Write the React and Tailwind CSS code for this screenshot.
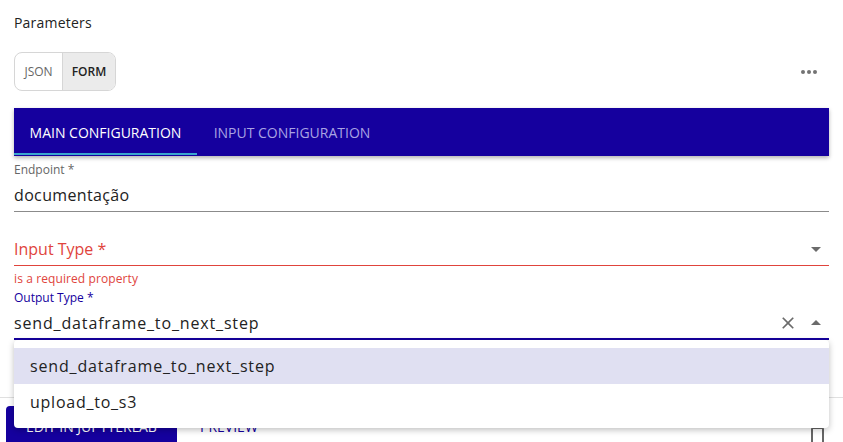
import React from "react";

const FONT = { fontFamily: "'Open Sans', 'Noto Sans', sans-serif" };

function ArrowDrop({ up = false, className = "" }) {
  return (
    <svg viewBox="0 0 24 24" width="24" height="24" className={className}>
      <path d={up ? "M7 14l5-5 5 5z" : "M7 10l5 5 5-5z"} fill="#6b6b6b" />
    </svg>
  );
}

function CloseIcon() {
  return (
    <svg viewBox="0 0 24 24" width="20" height="20">
      <path
        d="M19 6.41 17.59 5 12 10.59 6.41 5 5 6.41 10.59 12 5 17.59 6.41 19 12 13.41 17.59 19 19 17.59 13.41 12z"
        fill="#6b6b6b"
      />
    </svg>
  );
}

export default function App() {
  return (
    <div
      className="relative w-[843px] h-[442px] overflow-hidden bg-white text-[#222]"
      style={FONT}
    >
      {/* header */}
      <div className="px-[14px] pt-[13px]">
        <div className="text-[14px] leading-[20px] tracking-[0.2px] text-[#222]">Parameters</div>
        <div className="mt-[19px] flex items-center justify-between">
          <div className="flex h-[39px] rounded-[8px] border border-[#d6d6d6] overflow-hidden text-[12px]">
            <div className="flex items-center justify-center w-[48px] text-[#666] border-r border-[#d6d6d6]">
              JSON
            </div>
            <div className="flex items-center justify-center w-[52px] bg-[#ebebeb] text-[#222] font-semibold">
              FORM
            </div>
          </div>
          <div className="mr-[12px] flex items-center gap-[2px]">
            <span className="block w-[4px] h-[4px] rounded-full bg-[#737373]" />
            <span className="block w-[4px] h-[4px] rounded-full bg-[#737373]" />
            <span className="block w-[4px] h-[4px] rounded-full bg-[#737373]" />
          </div>
        </div>

        {/* tabs */}
        <div className="mt-[17px] flex h-[48px] bg-[#15009e] shadow-[0_2px_4px_rgba(0,0,0,0.3)]">
          <div className="relative flex items-center justify-center w-[183px] text-[14px] font-medium text-white">
            MAIN CONFIGURATION
            <span className="absolute left-0 right-0 bottom-[1px] h-[2px] bg-[#3aa6cf]" />
          </div>
          <div className="flex items-center justify-center w-[190px] text-[14px] font-medium text-[#a9a3e3]">
            INPUT CONFIGURATION
          </div>
        </div>

        {/* Endpoint */}
        <div className="mt-[7px] text-[12px] leading-[14px] text-[#666]">Endpoint *</div>
        <div className="pt-[6px] pb-[4px] border-b border-[#8b8b8b] text-[16px] leading-[24px] tracking-[0.35px] text-[#222]">
          documentação
        </div>

        {/* Input type */}
        <div className="mt-[25px] flex items-center justify-between pb-[4px] border-b border-[#e0443c] text-[16px] leading-[24px] text-[#e0443c]">
          <span>Input Type *</span>
          <ArrowDrop className="mr-[1px]" />
        </div>
        <div className="mt-[6px] text-[12px] leading-[14px] tracking-[0.1px] text-[#e0443c]">
          is a required property
        </div>

        {/* Output type */}
        <div className="mt-[5px] text-[12px] leading-[14px] text-[#15009e]">Output Type *</div>
        <div className="mt-[6px] flex items-center justify-between pb-[3px] border-b-2 border-[#15009e] text-[16px] leading-[24px] text-[#222]">
          <span className="tracking-[0.85px]">send_dataframe_to_next_step</span>
          <div className="flex items-center gap-[6px] mr-[1px]">
            <CloseIcon />
            <ArrowDrop up />
          </div>
        </div>
      </div>

      {/* bottom actions (behind dropdown) */}
      <div className="mt-[57px] h-px bg-[#e0e0e0]" />
      <div className="mt-[8px] flex items-center justify-between pl-[6px] pr-[19px]">
        <div className="flex items-center gap-[8px]">
          <div className="flex items-center h-[40px] w-[171px] justify-center rounded-[4px] bg-[#15009e] text-white text-[14px] font-medium">
            EDIT IN JUPYTERLAB
          </div>
          <div className="flex items-center h-[40px] px-[15px] text-[#15009e] text-[14px] font-medium">
            PREVIEW
          </div>
        </div>
        <div className="mt-[20px] w-[13px] h-[18px] border-2 border-[#666] rounded-[2px]" />
      </div>

      {/* dropdown menu */}
      <div className="absolute left-[14px] top-[340px] w-[815px] py-[8px] bg-white rounded-[4px] shadow-[0_2px_6px_rgba(0,0,0,0.25)] text-[16px] text-[#222]">
        <div className="h-[36px] flex items-center px-[16px] bg-[#e0e0f2] tracking-[0.85px]">
          send_dataframe_to_next_step
        </div>
        <div className="h-[36px] flex items-center px-[16px] tracking-[0.75px]">upload_to_s3</div>
      </div>
    </div>
  );
}
